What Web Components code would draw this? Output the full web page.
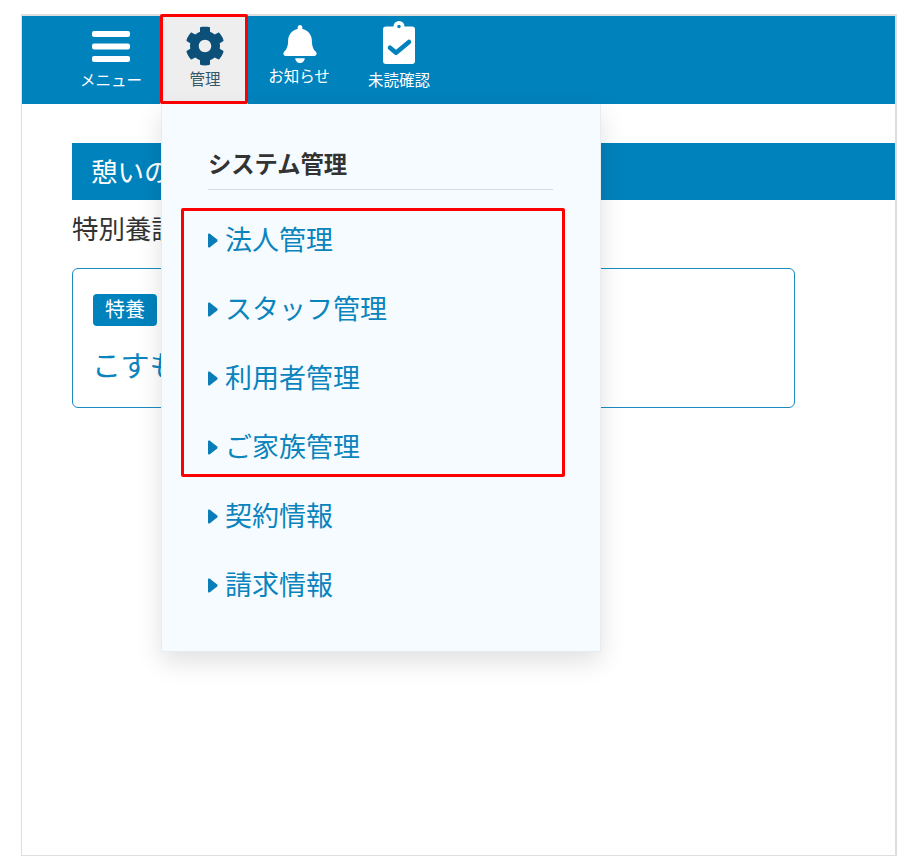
<!DOCTYPE html>
<html lang="ja">
<head>
<meta charset="utf-8">
<title>システム管理</title>
<style>
    html, body { margin: 0; background: #fff; }
    body { font-family: "Noto Sans CJK JP", "Noto Sans", sans-serif; color: #333; }
</style>
</head>
<body>
<app-frame>
    <top-bar slot="bar">
        <nav-item label="メニュー" icon="menu" style="--w: 88px; --pt: 15px; --ih: 31px; --gap: 7px; --mr: 5px"></nav-item>
        <nav-item label="管理" icon="cog" active style="--w: 88px; --pt: 11px; --ih: 38px; --gap: 3px; --mr: 2px; --ix: 1px; --lx: 2px"></nav-item>
        <nav-item label="お知らせ" icon="bell" style="--w: 98px; --pt: 9px; --ih: 38px; --gap: 2px; --mr: 2px; --ix: 1px"></nav-item>
        <nav-item label="未読確認" icon="check" style="--w: 98px; --pt: 5px; --ih: 43px; --gap: 5px"></nav-item>
    </top-bar>
    <title-band>憩いの里</title-band>
    <p-line>特別養護</p-line>
    <facility-card badge="特養">こすもす</facility-card>
    <drop-menu slot="overlay" heading="システム管理">
        <mark-box>
            <menu-link>法人管理</menu-link>
            <menu-link>スタッフ管理</menu-link>
            <menu-link>利用者管理</menu-link>
            <menu-link>ご家族管理</menu-link>
        </mark-box>
        <menu-link>契約情報</menu-link>
        <menu-link>請求情報</menu-link>
    </drop-menu>
</app-frame>

<script>
const ICONS = {
    menu: `<svg width="38" height="31" viewBox="0 0 38 31" fill="#fff"><rect y="0" width="38" height="6" rx="2"/><rect y="12.5" width="38" height="6" rx="2"/><rect y="25" width="38" height="6" rx="2"/></svg>`,
    cog: `<svg width="40" height="40" viewBox="0 0 512 512" fill="#0c5079"><path d="M487.4 315.7l-42.6-24.6c4.3-23.2 4.3-47 0-70.2l42.6-24.6c4.9-2.8 7.1-8.6 5.5-14-11.1-35.6-30-67.8-54.7-94.6-3.8-4.1-10-5.1-14.8-2.3L380.8 110c-17.9-15.4-38.5-27.3-60.8-35.1V25.8c0-5.6-3.9-10.5-9.4-11.7-36.7-8.2-74.3-7.8-109.2 0-5.5 1.2-9.4 6.1-9.4 11.7V75c-22.2 7.9-42.8 19.8-60.8 35.1L88.7 85.5c-4.9-2.8-11-1.9-14.8 2.3-24.7 26.7-43.6 58.9-54.7 94.6-1.7 5.4.6 11.2 5.5 14L67.3 221c-4.3 23.2-4.3 47 0 70.2l-42.6 24.6c-4.9 2.8-7.1 8.6-5.5 14 11.1 35.6 30 67.8 54.7 94.6 3.8 4.1 10 5.1 14.8 2.3l42.6-24.6c17.9 15.4 38.5 27.3 60.8 35.1v49.2c0 5.6 3.9 10.5 9.4 11.7 36.7 8.2 74.3 7.8 109.2 0 5.5-1.2 9.4-6.1 9.4-11.7v-49.2c22.2-7.9 42.8-19.8 60.8-35.1l42.6 24.6c4.9 2.8 11 1.9 14.8-2.3 24.7-26.7 43.6-58.9 54.7-94.6 1.5-5.5-.7-11.3-5.6-14.1zM256 336c-44.1 0-80-35.9-80-80s35.9-80 80-80 80 35.9 80 80-35.9 80-80 80z"/></svg>`,
    bell: `<svg width="34" height="38" viewBox="0 0 448 512" fill="#fff"><path d="M224 512c35.32 0 63.97-28.65 63.97-64H160.03c0 35.35 28.65 64 63.97 64zm215.39-149.71c-19.32-20.76-55.47-51.99-55.47-154.29 0-77.7-54.48-139.9-127.94-155.16V32c0-17.67-14.32-32-31.98-32s-31.98 14.33-31.98 32v20.84C118.56 68.1 64.08 130.3 64.08 208c0 102.3-36.15 133.53-55.47 154.29-6 6.45-8.66 14.16-8.61 21.71.11 16.4 12.98 32 32.1 32h383.8c19.12 0 32-15.6 32.1-32 .05-7.55-2.61-15.27-8.61-21.71z"/></svg>`,
    check: `<svg width="32" height="43" viewBox="0 0 32 43"><rect x="0" y="5.5" width="32" height="37.5" rx="3" fill="#fff"/><circle cx="16" cy="5.5" r="5.5" fill="#fff"/><circle cx="16" cy="5.5" r="1.7" fill="#0082bc"/><path d="M7 26.7 L13 31.7 L26 21" fill="none" stroke="#0082bc" stroke-width="4.5" stroke-linejoin="round" stroke-linecap="round"/></svg>`
};

// small helper so every element below stays a few lines
function define(tag, html, init) {
    customElements.define(tag, class extends HTMLElement {
        constructor() {
            super();
            this.attachShadow({ mode: 'open' });
            this.shadowRoot.innerHTML = html;
        }
        connectedCallback() {
            if (init) init(this, this.shadowRoot);
        }
    });
}

define('app-frame', `
    <style>
        :host {
            display: block;
            position: relative;
            box-sizing: border-box;
            width: 876px;
            height: 842px;
            margin: 14px 0 0 21px;
            border: 2px solid #dedede;
            border-bottom-width: 1px;
            border-left-width: 1px;
            background: #fff;
        }
        .content { padding: 39px 0 0 50px; }
        .over { position: absolute; left: 139px; top: 88px; }
    </style>
    <slot name="bar"></slot>
    <div class="content"><slot></slot></div>
    <div class="over"><slot name="overlay"></slot></div>
`);

define('top-bar', `
    <style>
        :host {
            display: flex;
            height: 88px;
            padding-left: 45px;
            background: #0082bc;
        }
    </style>
    <slot></slot>
`);

define('nav-item', `
    <style>
        :host {
            display: flex;
            flex-direction: column;
            align-items: center;
            position: relative;
            box-sizing: border-box;
            width: var(--w);
            margin-right: var(--mr, 0);
            padding-top: var(--pt);
            color: #fff;
            font-size: 15.5px;
            line-height: 20px;
        }
        :host([active]) { background: #eeeeee; color: #33566b; }
        :host([active])::after {
            content: "";
            position: absolute;
            left: 0;
            right: 0;
            top: -2px;
            bottom: 0;
            border: 3px solid #f00;
            border-radius: 2px;
        }
        .icon {
            display: flex;
            align-items: center;
            justify-content: center;
            height: var(--ih);
            margin-bottom: var(--gap);
            margin-left: var(--ix, 0);
        }
        .label { margin-left: var(--lx, 0); }
    </style>
    <div class="icon"></div>
    <span class="label"></span>
`, (el, root) => {
    root.querySelector('.icon').innerHTML = ICONS[el.getAttribute('icon')];
    root.querySelector('.label').textContent = el.getAttribute('label');
});

define('title-band', `
    <style>
        :host {
            display: block;
            height: 57px;
            padding-left: 19px;
            background: #0082bc;
            color: #fff;
            font-size: 26.5px;
            line-height: 55px;
        }
    </style>
    <slot></slot>
`);

define('p-line', `
    <style>
        :host {
            display: block;
            margin-top: 10px;
            font-size: 26.5px;
            line-height: 36px;
            color: #333;
        }
    </style>
    <slot></slot>
`);

define('facility-card', `
    <style>
        :host {
            display: block;
            box-sizing: border-box;
            width: 723px;
            height: 140px;
            margin-top: 22px;
            padding: 25px 20px 0;
            border: 1px solid #1a8cc2;
            border-radius: 6px;
        }
        .badge {
            display: block;
            width: 64px;
            height: 32px;
            border-radius: 4px;
            background: #0082bc;
            color: #fff;
            font-size: 20px;
            line-height: 29px;
            text-align: center;
        }
        .name {
            margin-top: 18px;
            margin-left: -1px;
            color: #0a84bd;
            font-size: 29px;
            line-height: 40px;
        }
    </style>
    <span class="badge"></span>
    <div class="name"><slot></slot></div>
`, (el, root) => {
    root.querySelector('.badge').textContent = el.getAttribute('badge');
});

define('drop-menu', `
    <style>
        :host {
            display: block;
            box-sizing: border-box;
            width: 440px;
            height: 548px;
            padding: 42px 47px 0 46px;
            background: #f6fbff;
            border: 1px solid #e6ecf0;
            border-top: 0;
            box-shadow: 0 10px 24px rgba(0, 0, 0, 0.12);
        }
        h2 {
            margin: 0;
            padding-bottom: 9px;
            border-bottom: 1px solid #d3dce2;
            color: #333;
            font-size: 23.3px;
            font-weight: 700;
            line-height: 34px;
        }
        .list { margin-top: 18px; }
    </style>
    <h2></h2>
    <div class="list"><slot></slot></div>
`, (el, root) => {
    root.querySelector('h2').textContent = el.getAttribute('heading');
});

define('mark-box', `
    <style>
        :host {
            display: block;
            box-sizing: border-box;
            width: 384px;
            height: 269px;
            margin: 0 0 3px -27px;
            padding-left: 24px;
            border: 3px solid #f00;
            border-radius: 2px;
        }
        .rows { margin-top: -7px; }
    </style>
    <div class="rows"><slot></slot></div>
`);

define('menu-link', `
    <style>
        :host {
            display: flex;
            align-items: center;
            gap: 7px;
            height: 69px;
            color: #0a84bd;
            font-size: 27px;
        }
        svg { flex: none; position: relative; top: 2px; }
    </style>
    <svg width="10" height="15" viewBox="0 0 10 15" fill="#0a7db8"><path d="M1.6 0.6 L9.2 6.4 Q10 7.5 9.2 8.6 L1.6 14.4 Q0 15 0 13.5 V1.5 Q0 0 1.6 0.6 Z"/></svg>
    <span><slot></slot></span>
`);
</script>
</body>
</html>
